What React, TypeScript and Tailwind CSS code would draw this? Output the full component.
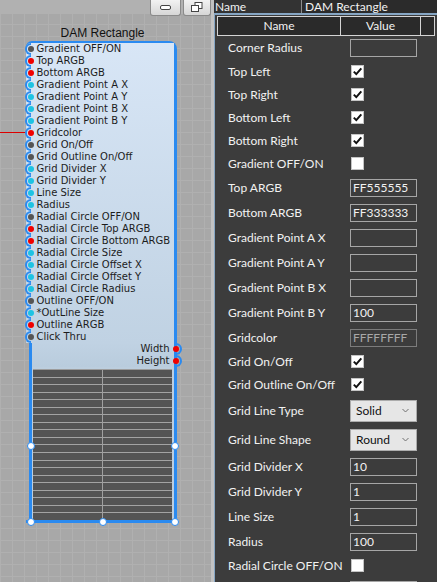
import React from 'react';

type PortKind = 'bool' | 'color' | 'num';

const DOT: Record<PortKind, string> = {
  bool: 'bg-[#555555]',
  color: 'bg-[#f00000]',
  num: 'bg-[#1ec3e3]',
};

const inputPorts: Array<[string, PortKind]> = [
  ['Gradient OFF/ON', 'bool'],
  ['Top ARGB', 'color'],
  ['Bottom ARGB', 'color'],
  ['Gradient Point A X', 'num'],
  ['Gradient Point A Y', 'num'],
  ['Gradient Point B X', 'num'],
  ['Gradient Point B Y', 'num'],
  ['Gridcolor', 'color'],
  ['Grid On/Off', 'bool'],
  ['Grid Outline On/Off', 'bool'],
  ['Grid Divider X', 'num'],
  ['Grid Divider Y', 'num'],
  ['Line Size', 'num'],
  ['Radius', 'num'],
  ['Radial Circle OFF/ON', 'bool'],
  ['Radial Circle Top ARGB', 'color'],
  ['Radial Circle Bottom ARGB', 'color'],
  ['Radial Circle Size', 'num'],
  ['Radial Circle Offset X', 'num'],
  ['Radial Circle Offset Y', 'num'],
  ['Radial Circle Radius', 'num'],
  ['Outline OFF/ON', 'bool'],
  ['*OutLine Size', 'num'],
  ['Outline ARGB', 'color'],
  ['Click Thru', 'bool'],
];

type Prop =
  | { label: string; kind: 'text'; value?: string; disabled?: boolean }
  | { label: string; kind: 'check'; checked: boolean }
  | { label: string; kind: 'select'; value: string };

const props: Prop[] = [
  { label: 'Corner Radius', kind: 'text' },
  { label: 'Top Left', kind: 'check', checked: true },
  { label: 'Top Right', kind: 'check', checked: true },
  { label: 'Bottom Left', kind: 'check', checked: true },
  { label: 'Bottom Right', kind: 'check', checked: true },
  { label: 'Gradient OFF/ON', kind: 'check', checked: false },
  { label: 'Top ARGB', kind: 'text', value: 'FF555555' },
  { label: 'Bottom ARGB', kind: 'text', value: 'FF333333' },
  { label: 'Gradient Point A X', kind: 'text' },
  { label: 'Gradient Point A Y', kind: 'text' },
  { label: 'Gradient Point B X', kind: 'text' },
  { label: 'Gradient Point B Y', kind: 'text', value: '100' },
  { label: 'Gridcolor', kind: 'text', value: 'FFFFFFFF', disabled: true },
  { label: 'Grid On/Off', kind: 'check', checked: true },
  { label: 'Grid Outline On/Off', kind: 'check', checked: true },
  { label: 'Grid Line Type', kind: 'select', value: 'Solid' },
  { label: 'Grid Line Shape', kind: 'select', value: 'Round' },
  { label: 'Grid Divider X', kind: 'text', value: '10' },
  { label: 'Grid Divider Y', kind: 'text', value: '1' },
  { label: 'Line Size', kind: 'text', value: '1' },
  { label: 'Radius', kind: 'text', value: '100' },
  { label: 'Radial Circle OFF/ON', kind: 'check', checked: false },
  // next row only peeks in at the bottom edge
  { label: '', kind: 'text' },
];

const InPort = ({ label, kind }: { label: string; kind: PortKind }) => (
  <div className="flex h-3 items-center">
    <span className="relative -ml-[1.5px] h-3 w-3 flex-none">
      <span className="absolute left-0 top-0 h-3 w-1.5 rounded-l-full border-2 border-r-0 border-[#2a8af0]" />
      <span className={`absolute left-[3px] top-[3px] h-1.5 w-1.5 rounded-full ${DOT[kind]}`} />
    </span>
    <span className="whitespace-nowrap">{label}</span>
  </div>
);

const OutPort = ({ label }: { label: string }) => (
  <div className="flex h-3 items-center justify-end">
    <span>{label}</span>
    <span className="relative -mr-[7.5px] h-3 w-3 flex-none">
      <span className="absolute right-0 top-0 h-3 w-1.5 rounded-r-full border-2 border-l-0 border-[#2a8af0]" />
      <span className="absolute left-[3px] top-[3px] h-1.5 w-1.5 rounded-full bg-[#f00000]" />
    </span>
  </div>
);

const Handle = ({ pos }: { pos: string }) => (
  <span className={`absolute h-2 w-2 -translate-x-1/2 -translate-y-1/2 rounded-full border border-[#2a8af0] bg-white ${pos}`} />
);

function Canvas() {
  return (
    <div className="relative h-[582px] w-[214px] flex-none overflow-hidden border-r-[3px] border-[#c2c2c2] bg-[#a8a8a8] bg-[linear-gradient(to_right,#b0b0b0_1px,transparent_1px),linear-gradient(to_bottom,#b0b0b0_1px,transparent_1px)] bg-[size:12px_12px]">
      {/* window bar */}
      <div className="flex h-[14px] items-start justify-end gap-[2px] bg-[#b1b1b1]">
        <button className="flex h-[16px] w-[31px] items-center justify-center rounded-b-[3px] border border-t-0 border-[#8a8a8a] bg-gradient-to-b from-[#f2f2f2] to-[#d6d6d6]">
          <span className="h-[5px] w-[11px] rounded-[2px] border border-[#444] bg-white" />
        </button>
        <button className="flex h-[16px] w-[28px] items-center justify-center rounded-b-[3px] border border-t-0 border-[#8a8a8a] bg-gradient-to-b from-[#f2f2f2] to-[#d6d6d6]">
          <svg width="12" height="11" viewBox="0 0 12 11">
            <rect x="4" y="0.5" width="7" height="6" fill="white" stroke="#444" />
            <rect x="0.5" y="3.5" width="7" height="6" fill="white" stroke="#444" />
          </svg>
        </button>
      </div>

      {/* wire into Gridcolor */}
      <div className="absolute left-0 top-[132px] h-px w-[26px] bg-[#dd0000]" />

      <div className="absolute left-[27px] top-[25px] w-[151px] text-center font-['Liberation_Sans',Arial,sans-serif] text-[12px] leading-4 text-[#111]">
        DAM Rectangle
      </div>

      {/* node */}
      <div className="absolute left-[26px] top-[41px] flex h-[482px] w-[151px] flex-col rounded-tl-[6px] rounded-tr-[8px] border-2 border-b-[3px] border-l-0 border-r-[3px] border-[#2a8af0] font-['DejaVu_Sans',Verdana,sans-serif] text-[10px] leading-3 text-[#1c1c1c]">
        <div className="rounded-tl-[5px] bg-gradient-to-b from-[#d8e6f6] to-[#c0d2e3]">
          {inputPorts.map(([label, kind]) => (
            <InPort key={label} label={label} kind={kind} />
          ))}
        </div>
        <div className="ml-[3px] flex flex-1 flex-col border-l-[3px] border-[#2a8af0] bg-[#bccede]">
          <div className="bg-gradient-to-b from-[#c0d2e3] to-[#b9ccdd]">
            <OutPort label="Width" />
            <OutPort label="Height" />
          </div>
          <div className="ml-px mr-[2px] mt-[2px] flex flex-1 border-t border-[#9c9c9c] bg-[#545454]">
            {[0, 1].map((c) => (
              <div key={c} className={`flex flex-1 flex-col ${c === 0 ? 'border-r border-[#a0a0a0]' : ''}`}>
                {Array.from({ length: 20 }).map((_, r) => (
                  <div key={r} className={`flex-1 ${r < 19 ? 'border-b border-[#a3a3a3]' : ''}`} />
                ))}
              </div>
            ))}
          </div>
        </div>
      </div>

      <Handle pos="left-[31px] top-[445.5px]" />
      <Handle pos="left-[175px] top-[445.5px]" />
      <Handle pos="left-[31px] top-[522px]" />
      <Handle pos="left-[103px] top-[522px]" />
      <Handle pos="left-[175px] top-[522px]" />
    </div>
  );
}

const Check = ({ checked }: { checked: boolean }) => (
  <span className="ml-px flex h-[13px] w-[13px] items-center justify-center border border-[#c4c4c4] bg-white">
    {checked && (
      <svg width="11" height="11" viewBox="0 0 11 11">
        <path d="M1.8 5.6 L4.3 8.1 L9.3 2.4" fill="none" stroke="#111" strokeWidth="2" />
      </svg>
    )}
  </span>
);

function PropRow({ p, h }: { p: Prop; h: string }) {
  return (
    <div className={`flex items-center ${h}`}>
      <div className="w-[123px] flex-none whitespace-nowrap pl-[11px]">{p.label}</div>
      <div className="flex pl-[10px]">
        {p.kind === 'text' && (
          <div
            className={`flex h-[18px] w-[67px] items-center border px-[2px] ${
              p.disabled ? 'border-[#7c7c7c] text-[#a8a8a8]' : 'border-[#a6a6a6]'
            }`}
          >
            {p.value}
          </div>
        )}
        {p.kind === 'check' && <Check checked={p.checked} />}
        {p.kind === 'select' && (
          <div className="flex h-[22px] w-[67px] items-center justify-between border border-[#acacac] bg-[#e6e6e6] pl-[5px] pr-[7px] text-[#111]">
            {p.value}
            <svg width="7" height="5" viewBox="0 0 7 5">
              <path d="M0.5 1 L3.5 4 L6.5 1" fill="none" stroke="#707070" strokeWidth="1" />
            </svg>
          </div>
        )}
      </div>
    </div>
  );
}

function PropertyPanel() {
  return (
    <div className="flex h-[582px] flex-1 flex-col overflow-hidden bg-[#3c3c3c] font-['Lato',sans-serif] text-[12px] text-[#f2f2f2]">
      <div className="flex h-[13px] leading-[13px]">
        <div className="w-[87px] bg-[#333333] pl-px">Name</div>
        <div className="flex-1 border-l border-[#8c8c8c] bg-[#2b2b2b] pl-[3px]">DAM Rectangle</div>
      </div>
      <div className="flex-1 border-l border-t-2 border-[#86a6c4] pl-[2px] pt-px">
        <div className="grid h-[20px] w-[218px] grid-cols-[123px_80px_1fr] border border-[#d4d4d4] bg-[#2a2a2a] leading-[18px]">
          <div className="border-r border-[#d4d4d4] text-center">Name</div>
          <div className="border-r border-[#d4d4d4] text-center">Value</div>
          <div />
        </div>
        {props.map((p, i) => (
          <PropRow
            key={i}
            p={p}
            h={i === 0 ? 'h-[24px]' : p.kind === 'check' ? 'h-[23px]' : p.kind === 'select' ? 'h-[29px]' : 'h-[25px]'}
          />
        ))}
      </div>
    </div>
  );
}

export default function App() {
  return (
    <div className="flex h-[582px] w-[437px] overflow-hidden">
      <Canvas />
      <PropertyPanel />
    </div>
  );
}
